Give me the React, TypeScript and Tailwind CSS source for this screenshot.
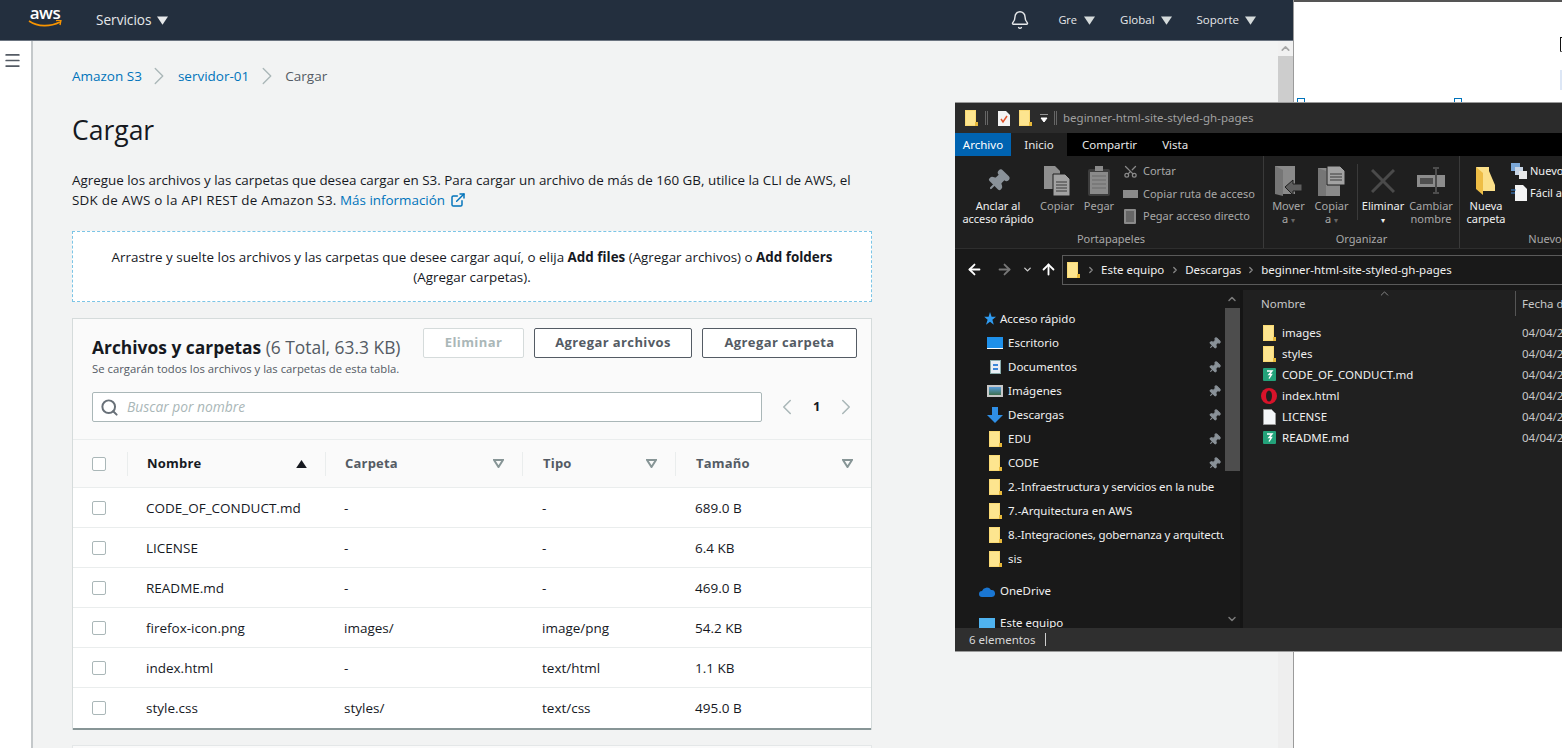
import React from 'react';
import { ChevronRight, ChevronLeft, Search, Bell, Menu, Pin, Scissors, ExternalLink, ArrowLeft, ArrowRight, ArrowUp, ChevronDown, ChevronUp } from 'lucide-react';

const Caret = ({ className }: { className: string }) => (
    <svg width="11" height="9" viewBox="0 0 12 9" className={className}>
        <path d="M0 0h12L6 9z" fill="currentColor" />
    </svg>
);

const OutlineCaret = () => (
    <svg width="11" height="9" viewBox="0 0 11 9" className="text-[#879596]">
        <path d="M1 1h9L5.5 8z" fill="none" stroke="currentColor" strokeWidth="2" />
    </svg>
);

const Folder = ({ className = '' }: { className?: string }) => (
    <svg width="13" height="16" viewBox="0 0 13 16" className={`shrink-0 ${className}`}>
        <path d="M0 0h11v12.5h2V16H0z" fill="#f9d974" />
        <path d="M1 1h9v11H13v3H1z" fill="#fde58f" />
        <path d="M10 12h3v4h-3z" fill="#e8b93a" />
    </svg>
);

const MdIcon = () => (
    <svg width="13" height="13" viewBox="0 0 13 13" className="shrink-0">
        <rect width="13" height="13" rx="1" fill="#23a27a" />
        <path d="M4 3h5L6 6.5h2.5L6 10.5" fill="none" stroke="#fff" strokeWidth="1.4" />
    </svg>
);

const OperaIcon = () => (
    <svg width="16" height="16" viewBox="0 0 16 16" className="shrink-0 -ml-[2px] mr-[-1px]">
        <circle cx="8" cy="8" r="8" fill="#d8132a" />
        <ellipse cx="8" cy="8" rx="3" ry="5.6" fill="#1f1f1f" />
    </svg>
);

const BlankIcon = () => (
    <svg width="13" height="16" viewBox="0 0 13 16" className="shrink-0">
        <path d="M.5.5h8l4 4v11H.5z" fill="#f4f6f8" stroke="#9a9a9a" />
    </svg>
);

const RibbonPin = () => (
    <Pin size={24} className="rotate-45 text-[#8a9299]" fill="#8a9299" />
);

const CopyGlyph = () => (
    <svg width="26" height="30" viewBox="0 0 26 30">
        <path d="M0 0h11l5 5v18H0z" fill="#8f8f8f" />
        <path d="M9 8h12l5 5v17H9z" fill="#a2a2a2" stroke="#1f1f1f" />
        <path d="M12 16h11M12 19h11M12 22h11M12 25h11" stroke="#3a3a3a" />
    </svg>
);

const PasteGlyph = () => (
    <svg width="22" height="30" viewBox="0 0 22 30">
        <rect y="3" width="22" height="27" rx="2" fill="#3d3d3d" />
        <rect x="2" y="6" width="18" height="22" fill="#8a8a8a" />
        <rect x="7" y="0" width="8" height="5" fill="#8a8a8a" />
        <path d="M4 10h14M4 14h14M4 18h14M4 22h14" stroke="#6a6a6a" />
    </svg>
);

const MoveGlyph = () => (
    <svg width="27" height="30" viewBox="0 0 27 30">
        <path d="M0 0h20v28H0z" fill="#8a8a8a" />
        <path d="M0 0l8 4v26l-8-2z" fill="#767676" />
        <path d="M10 21l8-7v4h9v7h-9v4z" fill="#5e5e5e" stroke="#1f1f1f" />
    </svg>
);

const CopyToGlyph = () => (
    <svg width="27" height="30" viewBox="0 0 27 30">
        <path d="M0 2h22v28H0z" fill="#8a8a8a" />
        <path d="M0 2l8 3v25H0z" fill="#767676" />
        <path d="M9 0h13l5 5v14H9z" fill="#a2a2a2" stroke="#1f1f1f" />
        <path d="M12 8h12M12 11h12M12 14h12" stroke="#3a3a3a" />
    </svg>
);

const DeleteGlyph = () => (
    <svg width="24" height="24" viewBox="0 0 24 24">
        <path d="M1 1l22 22M23 1L1 23" stroke="#4a4a4a" strokeWidth="3" />
    </svg>
);

const RenameGlyph = () => (
    <svg width="28" height="27" viewBox="0 0 28 27">
        <rect y="8" width="28" height="12" fill="#8c8c8c" />
        <rect x="3" y="11" width="13" height="6" fill="#4f4f4f" />
        <path d="M16 1h6M19 1v25M16 26h6" stroke="#4d4d4d" strokeWidth="2" />
    </svg>
);

const NewFolderGlyph = () => (
    <svg width="20" height="28" viewBox="0 0 20 28">
        <path d="M0 0h13v4l6 14v6H7z" fill="#fbe08a" />
        <path d="M0 0l7 6v22L0 22z" fill="#eebd45" />
    </svg>
);

const Header = () => (
    <div className="h-[41px] shrink-0 bg-[#232f3e] border-b border-[#6b7480] flex items-center text-[#e6e8ea] text-[11.5px]">
        <div className="ml-[28px] w-[34px] flex flex-col items-center text-white">
            <span className="text-[17px] font-semibold leading-[14px] tracking-[-0.5px] -mt-[6px]">aws</span>
            <svg width="34" height="8" viewBox="0 0 34 8">
                <path d="M1 1c9 6 21 6 31 1" fill="none" stroke="#f79400" strokeWidth="1.6" />
                <path d="M28 .5l5-.5-1 5" fill="none" stroke="#f79400" strokeWidth="1.4" />
            </svg>
        </div>
        <span className="ml-[34px] text-[13.6px]">Servicios</span>
        <Caret className="ml-[6px] text-[#e6e8ea]" />
        <div className="ml-auto flex items-center">
            <Bell size={20} strokeWidth={1.7} className="mr-[28px]" />
            <span className="text-[11px]">Gre</span>
            <Caret className="ml-[7px] mr-[25px] text-[#d5dbdb]" />
            <span>Global</span>
            <Caret className="ml-[6px] mr-[25px] text-[#d5dbdb]" />
            <span>Soporte</span>
            <Caret className="ml-[6px] mr-[37px] text-[#d5dbdb]" />
        </div>
    </div>
);

const rows = [
    ['CODE_OF_CONDUCT.md', '-', '-', '689.0 B'],
    ['LICENSE', '-', '-', '6.4 KB'],
    ['README.md', '-', '-', '469.0 B'],
    ['firefox-icon.png', 'images/', 'image/png', '54.2 KB'],
    ['index.html', '-', 'text/html', '1.1 KB'],
    ['style.css', 'styles/', 'text/css', '495.0 B'],
];

const Checkbox = () => (
    <div className="w-[14px] h-[14px] border border-[#aab7b8] rounded-[2px] bg-white" />
);

const HeadCell = ({ label, width, pad }: { label: string; width: string; pad: string }) => (
    <div className={`${width} ${pad} h-[24px] border-l border-[#eaeded] pr-[18px] flex items-center justify-between`}>
        <span className="font-bold text-[13px] tracking-[0.2px] text-[#545b64]">{label}</span>
        <OutlineCaret />
    </div>
);

const FileTable = () => (
    <div className="bg-white border-b-2 border-b-[#879596]">
        <div className="h-[49px] bg-[#fafafa] border-t border-b border-[#eaeded] flex items-center">
            <div className="w-[54px] pl-[19px]"><Checkbox /></div>
            <div className="w-[198px] h-[24px] border-l border-[#eaeded] pl-[19px] pr-[18px] flex items-center justify-between">
                <span className="font-bold text-[13px] tracking-[0.2px] text-[#16191f]">Nombre</span>
                <Caret className="text-[#16191f] w-[11px] h-[8px] rotate-180" />
            </div>
            <HeadCell label="Carpeta" width="w-[197px]" pad="pl-[19px]" />
            <HeadCell label="Tipo" width="w-[153px]" pad="pl-[20px]" />
            <HeadCell label="Tamaño" width="w-[196px]" pad="pl-[20px]" />
        </div>
        {rows.map((row, i) => (
            <div key={row[0]} className={`h-[40px] flex items-center text-[13.5px] text-[#16191f] ${i < rows.length - 1 ? 'border-b border-[#eaeded]' : ''}`}>
                <div className="w-[54px] pl-[19px]"><Checkbox /></div>
                <div className="w-[198px] pl-[19px] pt-px">{row[0]}</div>
                <div className="w-[197px] pl-[19px] pt-px">{row[1]}</div>
                <div className="w-[153px] pl-[20px] pt-px">{row[2]}</div>
                <div className="w-[196px] pl-[20px] pt-px">{row[3]}</div>
            </div>
        ))}
    </div>
);

const Main = () => (
    <div className="flex-1 min-h-0 flex">
        <div className="w-[33px] shrink-0 bg-white border-r-2 border-[#c4c8ca] pt-[10px] pl-[3px] text-[#545b64]">
            <Menu size={19} strokeWidth={2.2} />
        </div>
        <div className="flex-1 bg-[#f2f3f3] pl-[39px] pt-[26px] overflow-hidden">
            <div className="w-[800px] text-[13.4px] text-[#16191f]">
                <div className="flex items-center h-[18px] text-[13.5px] text-[#545b64]">
                    <span className="text-[#0073bb]">Amazon S3</span>
                    <ChevronRight size={30} strokeWidth={1.1} className="ml-[2px] mr-[4px] text-[#aab7b8]" />
                    <span className="text-[#0073bb]">servidor-01</span>
                    <ChevronRight size={30} strokeWidth={1.1} className="ml-[3px] mr-[3px] text-[#aab7b8]" />
                    <span>Cargar</span>
                </div>
                <h1 className="mt-[27px] text-[26.5px] leading-[36px] text-[#16191f]">Cargar</h1>
                <p className="mt-[22px] leading-[20px]">
                    Agregue los archivos y las carpetas que desea cargar en S3. Para cargar un archivo de más de 160 GB, utilice la CLI de AWS, el
                    <br />
                    <span className="tracking-[0.25px]">SDK de AWS o la API REST de Amazon S3.</span> <span className="text-[#0073bb]">Más información</span>
                    <ExternalLink size={16} strokeWidth={2.2} className="inline ml-[5px] -mt-[2px] text-[#0073bb]" />
                </p>
                <div className="mt-[21px] h-[71px] bg-white border border-dashed border-[#7cc5e6] flex items-center justify-center px-[30px] text-center leading-[20px]">
                    <div>
                        Arrastre y suelte los archivos y las carpetas que desee cargar aquí, o elija <b>Add files</b> (Agregar archivos) o <b>Add folders</b>
                        <br />
                        (Agregar carpetas).
                    </div>
                </div>
                <div className="mt-[16px] bg-[#fafafa] border-t border-l border-r border-[#d5dbdb]">
                    <div className="h-[120px] pl-[19px] pr-[14px] relative">
                        <div className="flex pt-[9px]">
                            <div className="flex-1 pt-[8px]">
                                <div className="text-[17.4px] leading-[22px]">
                                    <b>Archivos y carpetas</b> <span className="text-[#545b64]">(6 Total, 63.3 KB)</span>
                                </div>
                                <div className="text-[11.3px] leading-[16px] mt-[3px] text-[#545b64]">Se cargarán todos los archivos y las carpetas de esta tabla.</div>
                            </div>
                            <div className="flex gap-[10px] text-[13px] font-bold tracking-[0.4px]">
                                <div className="w-[101px] h-[30px] border border-[#d5dbdb] bg-white rounded-[2px] flex items-center justify-center text-[#aab7b8]">Eliminar</div>
                                <div className="w-[158px] h-[30px] border border-[#545b64] bg-white rounded-[2px] flex items-center justify-center text-[#545b64]">Agregar archivos</div>
                                <div className="w-[155px] h-[30px] border border-[#545b64] bg-white rounded-[2px] flex items-center justify-center text-[#545b64]">Agregar carpeta</div>
                            </div>
                        </div>
                        <div className="flex items-center mt-[15px]">
                            <div className="w-[670px] shrink-0 h-[30px] bg-white border border-[#aab7b8] rounded-[2px] flex items-center pl-[7px] gap-[8px]">
                                <Search size={19} strokeWidth={2.5} className="text-[#687078]" />
                                <span className="italic text-[#aab7b8] text-[13.8px]">Buscar por nombre</span>
                            </div>
                            <ChevronLeft size={26} strokeWidth={1.4} className="shrink-0 ml-[12px] text-[#aab7b8]" />
                            <span className="ml-[13px] font-bold text-[13px]">1</span>
                            <ChevronRight size={26} strokeWidth={1.4} className="shrink-0 ml-[13px] text-[#aab7b8]" />
                        </div>
                    </div>
                    <FileTable />
                </div>
                <div className="mt-[15px] h-[20px] bg-[#fafafa] border border-[#e4e7e8]" />
            </div>
        </div>
        <div className="w-[15px] shrink-0 bg-[#eeeeee] flex flex-col">
            <div className="h-[15px] bg-[#f1f1f1] flex items-center justify-center">
                <ChevronUp size={13} strokeWidth={3} className="text-[#a6a6a6]" />
            </div>
            <div className="h-[300px] bg-[#cdcdcd]" />
        </div>
    </div>
);

const BigButton = ({ icon, lines, width, dim = false }: { icon: React.ReactNode; lines: React.ReactNode[]; width: string; dim?: boolean }) => (
    <div className={`${width} shrink-0 flex flex-col items-center ${dim ? 'text-[#a8a8a8]' : 'text-[#f0f0f0]'}`}>
        <div className="h-[33px] flex items-center justify-center">{icon}</div>
        <div className="mt-[2px] leading-[13px] text-center whitespace-nowrap">
            {lines.map((line, i) => <div key={i}>{line}</div>)}
        </div>
    </div>
);

const SmallAction = ({ icon, label }: { icon: React.ReactNode; label: string }) => (
    <div className="h-[22.5px] flex items-center text-[#a8a8a8] whitespace-nowrap">
        <div className="w-[20px] flex justify-center mr-[3px]">{icon}</div>
        {label}
    </div>
);

const GroupLabel = ({ label }: { label: string }) => (
    <div className="h-[18px] text-center text-[#a8a8a8] leading-[18px] whitespace-nowrap">{label}</div>
);

const Ribbon = () => (
    <div className="h-[93px] shrink-0 bg-[#1f1f1f] border-b border-[#2e2e2e] flex text-[11px] overflow-hidden">
        <div className="w-[309px] shrink-0 border-r border-[#3a3a3a] flex flex-col pl-[4px]">
            <div className="h-[74px] pt-[8px] flex">
                <BigButton width="w-[78px]" icon={<RibbonPin />} lines={['Anclar al', 'acceso rápido']} />
                <BigButton width="w-[40px]" dim icon={<CopyGlyph />} lines={['Copiar']} />
                <BigButton width="w-[44px]" dim icon={<PasteGlyph />} lines={['Pegar']} />
                <div className="-ml-px -mt-[4px]">
                    <SmallAction icon={<Scissors size={15} className="-rotate-90 text-[#8a8a8a]" />} label="Cortar" />
                    <SmallAction icon={<div className="w-[15px] h-[8px] bg-[#8a8a8a]" />} label="Copiar ruta de acceso" />
                    <SmallAction icon={<div className="w-[12px] h-[15px] rounded-[1px] bg-[#666] border-2 border-[#8a8a8a]" />} label="Pegar acceso directo" />
                </div>
            </div>
            <GroupLabel label="Portapapeles" />
        </div>
        <div className="w-[196px] shrink-0 border-r border-[#3a3a3a] flex flex-col">
            <div className="h-[74px] pt-[8px] flex">
                <BigButton width="w-[49px]" dim icon={<MoveGlyph />} lines={['Mover', <>a <span className="text-[#666] text-[8px]">▾</span></>]} />
                <BigButton width="w-[37px]" dim icon={<CopyToGlyph />} lines={['Copiar', <>a <span className="text-[#666] text-[8px]">▾</span></>]} />
                <div className="w-px h-[56px] bg-[#3a3a3a] ml-[7px]" />
                <BigButton width="w-[50px]" icon={<DeleteGlyph />} lines={['Eliminar', <span className="text-[8px]">▾</span>]} />
                <BigButton width="w-[46px]" dim icon={<RenameGlyph />} lines={['Cambiar', 'nombre']} />
            </div>
            <GroupLabel label="Organizar" />
        </div>
        <div className="flex-1 min-w-0 flex flex-col pl-[6px]">
            <div className="h-[74px] pt-[8px] flex">
                <BigButton width="w-[40px]" icon={<NewFolderGlyph />} lines={['Nueva', 'carpeta']} />
                <div className="ml-[5px] -mt-[4px] text-[#f0f0f0]">
                    <div className="h-[22px] flex items-center gap-[3px] whitespace-nowrap">
                        <svg width="16" height="16" viewBox="0 0 16 16"><rect width="9" height="8" fill="#7aa7d8" /><rect x="4" y="4" width="8" height="8" fill="#c9d6e6" /><rect x="8" y="8" width="8" height="8" fill="#e8e8e8" /></svg>
                        Nuevo
                    </div>
                    <div className="h-[22px] flex items-center gap-[3px] whitespace-nowrap">
                        <svg width="16" height="16" viewBox="0 0 16 16"><path d="M4 0h8l4 4v12H4z" fill="#f4f4f4" /><path d="M0 5h5M0 8h4" stroke="#3a86d8" /></svg>
                        Fácil acceso
                    </div>
                </div>
            </div>
            <div className="pl-[62px]"><GroupLabel label="Nuevo" /></div>
        </div>
    </div>
);

const quickAccess = [
    { label: 'Escritorio', icon: <div className="w-[16px] h-[12px] bg-[#1e90ea] border-b border-white" />, pin: true },
    { label: 'Documentos', icon: <div className="w-[11px] h-[14px] bg-[#e8eef4] border border-[#8aa]"><div className="mt-[3px] mx-[2px] h-[6px] border-y-2 border-[#3a86d8]" /></div>, pin: true },
    { label: 'Imágenes', icon: <div className="w-[16px] h-[12px] bg-gradient-to-b from-[#5a9bd8] to-[#3f6f4f] border-2 border-[#c8c8c8]" />, pin: true },
    { label: 'Descargas', icon: <svg width="16" height="16" viewBox="0 0 16 16"><path d="M5 0h6v8h5l-8 8-8-8h5z" fill="#2f8fe6" /></svg>, pin: true },
    { label: 'EDU', icon: <Folder />, pin: true },
    { label: 'CODE', icon: <Folder />, pin: true },
    { label: '2.-Infraestructura y servicios en la nube', icon: <Folder />, pin: false, tight: true },
    { label: '7.-Arquitectura en AWS', icon: <Folder />, pin: false },
    { label: '8.-Integraciones, gobernanza y arquitectura', icon: <Folder />, pin: false, tight: true },
    { label: 'sis', icon: <Folder />, pin: false },
];

const NavPane = () => (
    <div className="w-[285px] shrink-0 bg-[#191919] flex text-[#f0f0f0] overflow-hidden">
        <div className="w-[269px] shrink-0 pt-[17px] overflow-hidden">
            <div className="h-[24px] flex items-center pl-[26px] gap-[4px]">
                <svg width="15" height="15" viewBox="0 0 15 15"><path d="M9 0l1.6 4.8H15l-3.6 3 1.4 5-3.8-3-4 3 1.6-5-3.4-3h4.4z" fill="#2f9bf0" /></svg>
                Acceso rápido
            </div>
            {quickAccess.map(item => (
                <div key={item.label} className="h-[24px] flex items-center">
                    <div className="w-[36px] ml-[29px] shrink-0 flex items-center justify-start pl-[1px]">
                        <div className="w-[20px] flex justify-center">{item.icon}</div>
                    </div>
                    <span className={`flex-1 whitespace-nowrap overflow-hidden -ml-[12px] min-w-0 ${item.tight ? 'tracking-[-0.17px]' : ''}`}>{item.label}</span>
                    {item.pin && <Pin size={13} fill="#8a9299" className="rotate-45 text-[#8a9299] mr-[3px] ml-[2px]" />}
                </div>
            ))}
            <div className="h-[24px] mt-[8px] flex items-center pl-[24px] gap-[5px]">
                <svg width="16" height="11" viewBox="0 0 16 11"><path d="M3 11a3 3 0 0 1 0-6 5 5 0 0 1 9-1 3.5 3.5 0 0 1 1 7z" fill="#1a76d2" /></svg>
                OneDrive
            </div>
            <div className="h-[24px] mt-[8px] flex items-center pl-[24px] gap-[5px]">
                <div className="w-[16px] h-[11px] bg-[#4fb3f0]" />
                Este equipo
            </div>
        </div>
        <div className="w-[16px] shrink-0 flex flex-col items-center">
            <div className="h-[18px] flex items-center"><ChevronUp size={12} strokeWidth={3} className="text-[#7a7a7a]" /></div>
            <div className="w-[15px] h-[163px] bg-[#4d4d4d]" />
            <div className="mt-auto h-[18px] flex items-center"><ChevronDown size={12} strokeWidth={3} className="text-[#7a7a7a]" /></div>
        </div>
    </div>
);

const files = [
    { name: 'images', icon: <Folder /> },
    { name: 'styles', icon: <Folder /> },
    { name: 'CODE_OF_CONDUCT.md', icon: <MdIcon /> },
    { name: 'index.html', icon: <OperaIcon /> },
    { name: 'LICENSE', icon: <BlankIcon /> },
    { name: 'README.md', icon: <MdIcon /> },
];

const FilePane = () => (
    <div className="flex-1 min-w-0 bg-[#202020] border-l-[3px] border-[#151515] text-[#f0f0f0] overflow-hidden relative">
        <ChevronUp size={13} strokeWidth={1.5} className="absolute left-[135px] top-[-3px] text-[#9a9a9a]" />
        <div className="h-[27px] flex items-center text-[#c8c8c8]">
            <div className="w-[272px] shrink-0 pl-[18px]">Nombre</div>
            <div className="h-[25px] border-l border-[#555] pl-[6px] flex items-center whitespace-nowrap">Fecha de modificación</div>
        </div>
        <div className="mt-[5px]">
            {files.map(file => (
                <div key={file.name} className="h-[21px] flex items-center">
                    <div className="w-[39px] shrink-0 pl-[20px] flex">{file.icon}</div>
                    <div className="w-[240px] shrink-0 whitespace-nowrap">{file.name}</div>
                    <div className="whitespace-nowrap text-[#c8c8c8]">04/04/2021 12:00</div>
                </div>
            ))}
        </div>
    </div>
);

const Explorer = () => (
    <div className="absolute left-[955px] top-[102px] w-[607px] h-[550px] border-t border-b border-[#9a9a9a] bg-[#1f1f1f] flex flex-col text-[11.5px] font-['Noto_Sans',sans-serif] overflow-hidden">
        <div className="h-[30px] shrink-0 bg-[#2b2b2b] flex items-center pl-[10px] text-[#a0a0a0]">
            <Folder />
            <div className="w-[3px] h-[14px] border-x border-[#666] ml-[7px]" />
            <svg width="12" height="15" viewBox="0 0 12 15" className="ml-[10px]"><path d="M0 0h8l4 4v11H0z" fill="#f4f4f4" /><path d="M3 8l2 3 4-6" fill="none" stroke="#e0522a" strokeWidth="1.5" /></svg>
            <Folder className="ml-[9px]" />
            <svg width="8" height="9" viewBox="0 0 8 9" className="ml-[8px]"><path d="M0 0h8M1 4h6l-3 4z" stroke="#fff" fill="#fff" /></svg>
            <div className="w-[3px] h-[14px] border-x border-[#666] ml-[6px] mr-[6px]" />
            beginner-html-site-styled-gh-pages
        </div>
        <div className="h-[23px] shrink-0 bg-black flex items-center text-[#e8e8e8]">
            <div className="w-[56px] h-full bg-[#0063b1] flex items-center justify-center text-white">Archivo</div>
            <div className="w-[56px] h-full bg-[#1f1f1f] flex items-center justify-center">Inicio</div>
            <div className="ml-[15px]">Compartir</div>
            <div className="ml-[25px]">Vista</div>
        </div>
        <Ribbon />
        <div className="h-[41px] shrink-0 bg-[#191919] flex items-center text-[#f0f0f0]">
            <ArrowLeft size={17} strokeWidth={2.6} className="ml-[11px] text-white" />
            <ArrowRight size={17} strokeWidth={2.6} className="ml-[13px] text-[#777]" />
            <ChevronDown size={11} strokeWidth={3} className="ml-[9px] text-[#ccc]" />
            <ArrowUp size={17} strokeWidth={2.6} className="ml-[7px] text-white" />
            <div className="ml-[5px] flex-1 h-[30px] border border-[#5a5a5a] border-r-0 flex items-center pl-[4px]">
                <Folder />
                <ChevronRight size={10} strokeWidth={3} className="mx-[5.5px] text-[#888]" />
                Este equipo
                <ChevronRight size={10} strokeWidth={3} className="mx-[5.5px] text-[#888]" />
                Descargas
                <ChevronRight size={10} strokeWidth={3} className="mx-[5px] text-[#888]" />
                beginner-html-site-styled-gh-pages
            </div>
        </div>
        <div className="flex-1 min-h-0 flex">
            <NavPane />
            <FilePane />
        </div>
        <div className="h-[23px] shrink-0 bg-[#2f2f2f] flex items-center pl-[14px] text-[#d8d8d8]">
            6 elementos
            <div className="w-px h-[13px] bg-[#cfcfcf] ml-[10px]" />
        </div>
    </div>
);

export default function App() {
    return (
        <div className="relative w-[1562px] h-[748px] overflow-hidden flex bg-white font-['Open_Sans',sans-serif]">
            <div className="w-[1293px] shrink-0 flex flex-col">
                <Header />
                <Main />
            </div>
            <div className="flex-1 flex flex-col bg-white border-l border-[#9b9b9b]">
                <div className="h-[2px] bg-[#555]" />
                <div className="h-[96px] flex flex-col items-end">
                    <div className="w-[2px] h-[14px] mt-[35px] border-t border-l border-[#111]" />
                    <div className="w-[2px] h-px bg-[#666]" />
                    <div className="w-[2px] h-[20px] mt-[18px] bg-[#dce6f5]" />
                </div>
                <div className="flex pl-[3px]">
                    <div className="w-[8px] h-[4px] border-x border-t border-[#0073bb]" />
                    <div className="ml-[149px] w-[8px] h-[4px] border-x border-t border-[#0073bb]" />
                </div>
            </div>
            <Explorer />
        </div>
    );
}
